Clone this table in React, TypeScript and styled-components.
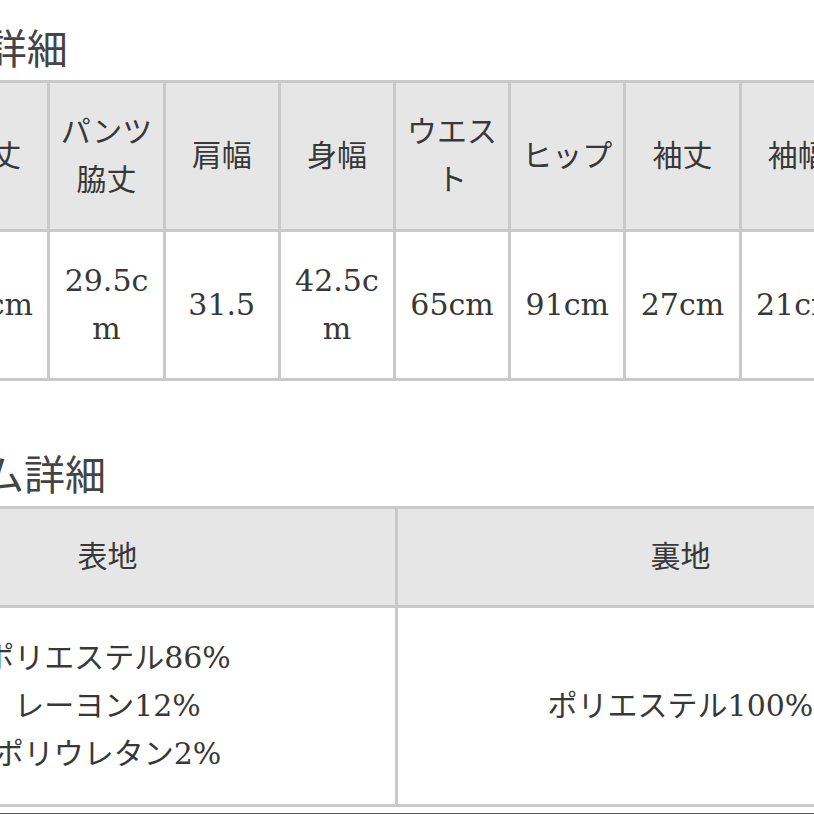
import React from "react";
import styled, { createGlobalStyle } from "styled-components";

const Global = createGlobalStyle`
  html, body { margin: 0; padding: 0; background: #ffffff; }
  body { overflow: hidden; }
`;

const Page = styled.div`
  width: 814px;
  height: 814px;
  overflow: hidden;
  background: #ffffff;
`;

const Sheet = styled.div`
  margin-left: -183px;
  width: 1155px;
  display: flex;
  flex-direction: column;
`;

const Title = styled.h2<{ $top: number }>`
  margin: ${(p) => p.$top}px 0 8px 0;
  padding-left: 47px;
  height: 52px;
  line-height: 52px;
  font-size: 41px;
  font-weight: 400;
  color: #444444;
  font-family: "Noto Sans CJK JP", sans-serif;
  white-space: nowrap;
`;

const Grid = styled.div<{ $cols: string }>`
  display: grid;
  grid-template-columns: ${(p) => p.$cols};
  gap: 3px;
  padding: 3px;
  background: #c9c9c9;
  box-sizing: border-box;
`;

const Cell = styled.div<{ $head?: boolean; $h: number }>`
  height: ${(p) => p.$h}px;
  background: ${(p) => (p.$head ? "#e6e6e6" : "#ffffff")};
  display: flex;
  align-items: center;
  justify-content: center;
  text-align: center;
  padding: 0 7px;
  box-sizing: border-box;
  font-family: "DejaVu Serif", "Noto Sans CJK JP", serif;
  font-size: 30px;
  line-height: 48px;
  color: #383838;
  word-break: break-all;
  overflow: hidden;
`;

const CellText = styled.span`
  display: block;
  width: 100%;
`;

const BottomRule = styled.div`
  margin-top: 6px;
  height: 2px;
  background: #5a5a5a;
`;

const sizeHeads = ["総丈", "着丈", "パンツ脇丈", "肩幅", "身幅", "ウエスト", "ヒップ", "袖丈", "袖幅", "裾幅"];
const sizeVals = ["94cm", "68cm", "29.5cm", "31.5", "42.5cm", "65cm", "91cm", "27cm", "21cm", "48cm"];

export default function App() {
  return (
    <Page>
      <Global />
      <Sheet>
        <Title $top={20}>サイズ詳細</Title>
        <Grid $cols="repeat(10, 1fr)">
          {sizeHeads.map((h) => (
            <Cell key={h} $head $h={146}>
              <CellText>{h}</CellText>
            </Cell>
          ))}
          {sizeVals.map((v, i) => (
            <Cell key={i} $h={146}>
              <CellText>{v}</CellText>
            </Cell>
          ))}
        </Grid>
        <Title $top={65}>アイテム詳細</Title>
        <Grid $cols="575px 565px">
          <Cell $head $h={96}>
            <CellText>表地</CellText>
          </Cell>
          <Cell $head $h={96}>
            <CellText>裏地</CellText>
          </Cell>
          <Cell $h={196}>
            <CellText>
              ポリエステル86%
              <br />
              レーヨン12%
              <br />
              ポリウレタン2%
            </CellText>
          </Cell>
          <Cell $h={196}>
            <CellText>ポリエステル100%</CellText>
          </Cell>
        </Grid>
        <BottomRule />
      </Sheet>
    </Page>
  );
}
